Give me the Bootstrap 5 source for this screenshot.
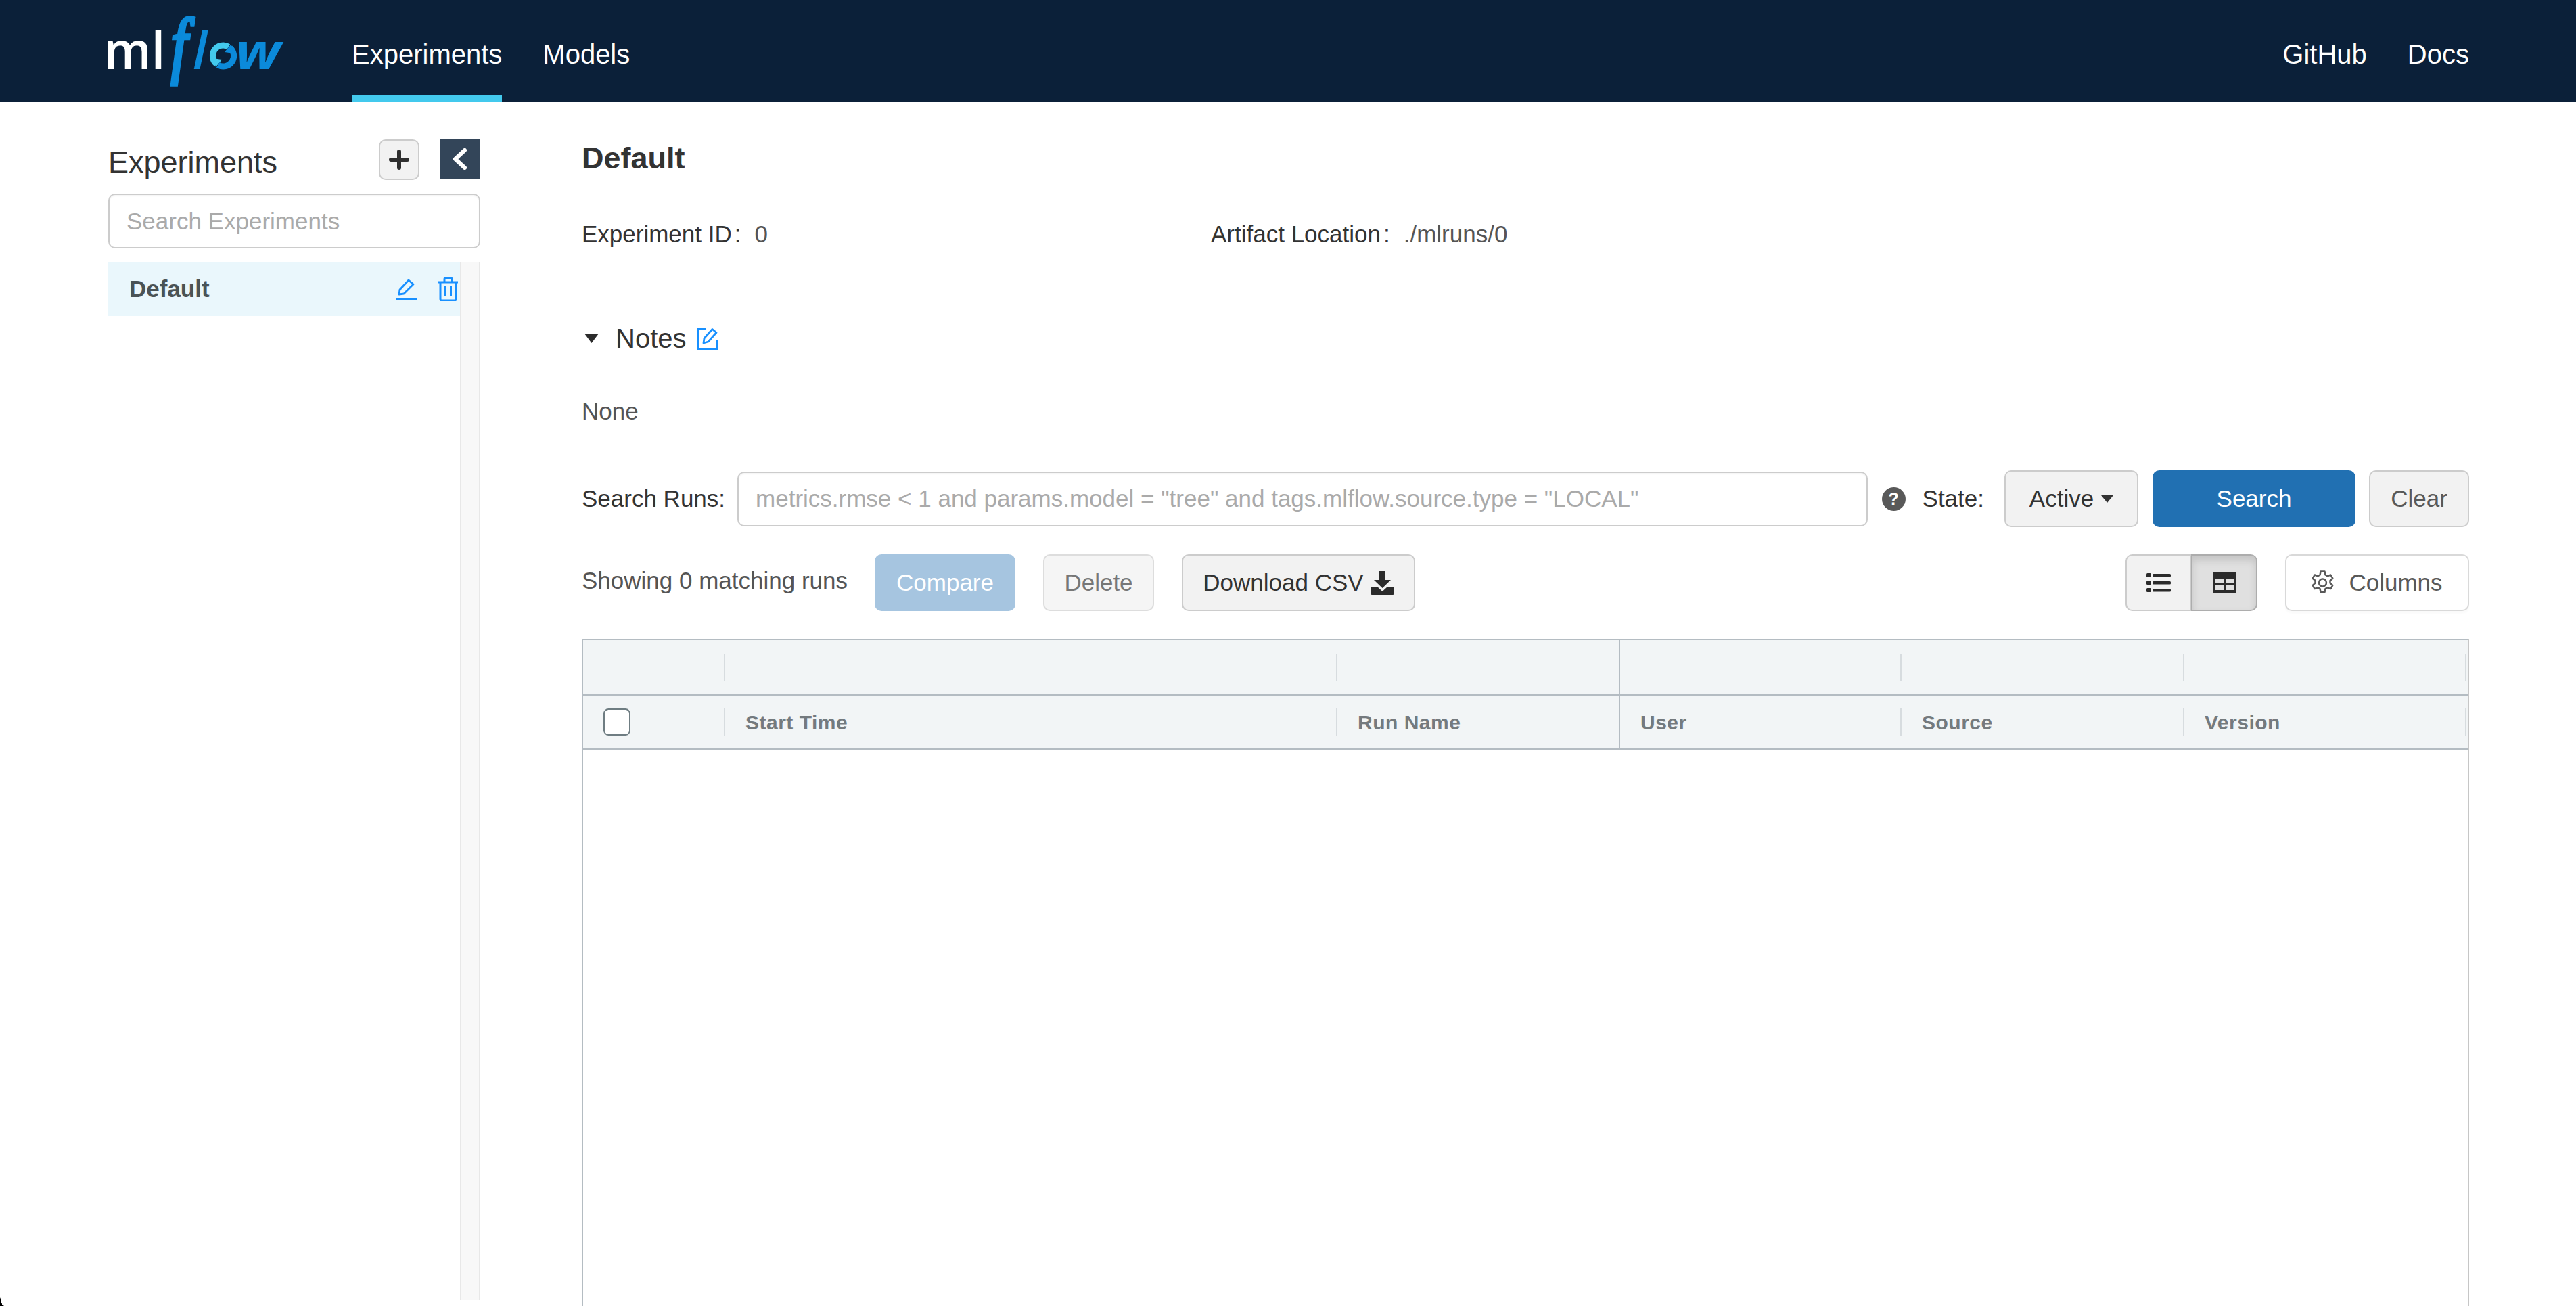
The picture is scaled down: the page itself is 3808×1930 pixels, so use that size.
<!DOCTYPE html>
<html lang="en">
<head>
<meta charset="utf-8">
<title>MLflow</title>
<link href="https://cdn.jsdelivr.net/npm/bootstrap@5.3.0/dist/css/bootstrap.min.css" rel="stylesheet">
<style>
html,body{height:100%;}
body{font-family:"Liberation Sans",Arial,sans-serif;font-size:35px;line-height:50px;color:#333;background:#fff;overflow:hidden;}
.top-bar{height:150px;background:#0b2039;padding:0 158px 0 160px;flex-wrap:nowrap;}
.logo-box{display:block;width:260px;height:100px;margin-right:100px;overflow:visible;}
.top-link{display:flex;align-items:center;height:150px;padding:19px 0 0;font-size:40px;line-height:50px;color:#fff;text-decoration:none;border-bottom:10px solid transparent;}
.top-link.is-active{border-bottom-color:#43c9ed;}
.top-links{gap:60px;}
.page-body{height:1780px;padding:0 158px 0 160px;}
.side-col{width:550px;margin-right:150px;padding:55px 0 9px;flex:none;}
.side-title{font-size:45px;line-height:60px;height:60px;padding-top:5px;color:#333;}
.plus-btn{width:60px;height:60px;margin-top:1px;padding:0;border:2.5px solid #ccc;border-radius:10px;background:#f2f2f2;}
.back-btn{width:60px;height:60px;margin-left:30px;padding:0;border:0;border-radius:0;background:#334559;}
.find-box{height:81px;border:2.5px solid #ccc;border-radius:10px;font-size:35px;padding:0 25px;box-shadow:inset 0 2px 2px rgba(0,0,0,.04);color:#333;}
.find-box::placeholder{color:#aaa;opacity:1;}
.side-search{margin:20px 0;}
.side-list{min-height:0;}
.exp-item{height:80px;padding:0 2px 0 31px;border:0;border-radius:0;background:#eaf7fc;color:#4a5356;font-weight:700;font-size:35px;line-height:80px;}
.exp-tools{gap:30px;}
.scroll-track{width:30px;flex:none;background:#f8f8f8;border-left:2.5px solid #e8e8e8;border-right:2.5px solid #e8e8e8;}
.main-col{width:2790px;flex:none;min-height:0;}
.exp-title{font-size:45px;line-height:60px;font-weight:700;margin:54px 0 0;color:#333;}
.meta-row{margin-top:57px;}
.meta-cell{width:930px;}
.colon{margin:0 20px 0 4px;}
.val-text{color:#555;}
.notes-row{margin-top:104px;font-size:40px;line-height:50px;color:#333;}
.notes-row .notes-word{margin:0 15px 0 24px;}
.none-text{margin-top:58px;color:#555;}
.search-row{margin-top:62px;height:84px;}
.plain-label{margin-right:18px;white-space:nowrap;}
.query-box{flex:1 1 auto;width:auto;}
.help-dot{width:35px;height:35px;margin:0 25px 0 21px;border-radius:50%;background:#595959;color:#fff;font-size:25px;line-height:35px;font-weight:700;text-align:center;flex:none;}
.act-btn{height:84px;padding:0;border:2.5px solid #ccc;border-radius:10px;background:#f2f2f2;color:#333;font-size:35px;line-height:50px;display:inline-flex;align-items:center;justify-content:center;}
.act-btn.state-btn{width:198px;margin-left:30px;}
.act-btn.dropdown-toggle::after{margin-left:11px;border-top:11px solid #333;border-right:9px solid transparent;border-left:9px solid transparent;border-bottom:0;vertical-align:0;}
.act-btn.go-btn{width:300px;margin-left:21px;background:#2170b2;border-color:#2170b2;color:#fff;}
.act-btn.clear-btn{width:148px;margin-left:20px;color:#595959;}
.tools-row{margin-top:40px;height:84px;}
.count-text{color:#555;margin:0 40px 6px 0;white-space:nowrap;}
.act-btn.cmp-btn{width:208px;background:#a6c5e0;border-color:#a6c5e0;color:#fff;opacity:1;}
.act-btn.del-btn{width:164px;margin-left:41px;background:#f5f5f5;border-color:#ddd;color:#777;opacity:1;}
.act-btn.csv-btn{width:345px;margin-left:41px;gap:10px;}
.view-group{margin-left:auto;}
.view-group .act-btn{width:98px;}
.view-group .act-btn.is-on{background:#e0e0e0;border-color:#adadad;box-shadow:inset 0 7px 12px rgba(0,0,0,.125);}
.act-btn.cols-btn{width:272px;margin-left:41px;background:#fff;border-color:#d9d9d9;color:#595959;gap:22px;box-shadow:0 4px 3px rgba(0,0,0,.02);}
.runs-grid{margin-top:41px;flex:1 1 auto;border:2.5px solid #b4bcc2;border-right-color:#c6c6c6;border-bottom:0;}
.head-line{background:#f2f5f6;height:82px;border-bottom:2.5px solid #b4bcc2;}
.head-line + .head-line{height:80px;}
.head-cell{height:100%;padding-left:30px;font-size:30px;font-weight:700;letter-spacing:.5px;color:#747a7e;justify-content:space-between;align-items:center;line-height:30px;}
.head-label{padding-top:2px;}
.head-mark{width:2px;height:40px;background:#d7dcdf;flex:none;}
.w-first{width:210px;}
.w-start{width:905px;}
.w-name{width:418px;border-right:2.5px solid #b4bcc2;}
.w-user{width:416px;}
.w-src{width:418px;}
.w-ver{width:417px;}
.tick-box{width:40px;height:40px;margin:0;border:2.5px solid #6f7d82;border-radius:7px;background-color:#fff;flex:none;}
.corner-l{position:fixed;left:0;bottom:0;width:6px;height:18px;pointer-events:none;background:radial-gradient(ellipse 6px 18px at 100% 0,transparent 96%,#000 100%);}
</style>
</head>
<body>
<nav class="navbar top-bar d-flex align-items-center">
  <div class="d-flex align-items-center">
    <svg class="logo-box" viewBox="0 0 260 100" role="img" aria-label="mlflow">
      <text x="-6" y="77" font-family="Open Sans" font-weight="600" font-size="76" fill="#fff" textLength="90" lengthAdjust="spacingAndGlyphs">ml</text>
      <text transform="translate(93 77) scale(.8 1)" font-family="Liberation Serif" font-style="italic" font-size="108" fill="#0b8ada" stroke="#0b8ada" stroke-width="5.500">f</text>
      <text x="125" y="77" font-family="Open Sans" font-style="italic" font-weight="600" font-size="76" fill="#0b8ada">l</text>
      <path d="M177.750 44.100A15.500 15.500 0 0 0 160 69.400" fill="none" stroke="#43c9ed" stroke-width="9"/>
      <path d="M155 61l13 2-9 11z" fill="#43c9ed"/>
      <g transform="rotate(180 170 57.500)"><path d="M177.750 44.100A15.500 15.500 0 0 0 160 69.400" fill="none" stroke="#0b8ada" stroke-width="9"/><path d="M155 61l13 2-9 11z" fill="#0b8ada"/></g>
      <text x="188" y="77" font-family="Open Sans" font-style="italic" font-weight="700" font-size="74" fill="#0b8ada" textLength="67" lengthAdjust="spacingAndGlyphs">w</text>
    </svg>
    <div class="d-flex top-links">
      <a class="top-link is-active" href="#">Experiments</a>
      <a class="top-link" href="#">Models</a>
    </div>
  </div>
  <div class="d-flex top-links">
    <a class="top-link" href="#">GitHub</a>
    <a class="top-link" href="#">Docs</a>
  </div>
</nav>
<div class="d-flex page-body">
  <aside class="side-col d-flex flex-column">
    <div class="d-flex align-items-start">
      <div class="side-title flex-grow-1">Experiments</div>
      <button class="btn plus-btn d-flex align-items-center justify-content-center" type="button" aria-label="Add">
        <svg width="30" height="30" viewBox="0 0 30 30"><path d="M15 3v24M3 15h24" stroke="#2f2f2f" stroke-width="6" stroke-linecap="round"/></svg>
      </button>
      <button class="btn back-btn d-flex align-items-center justify-content-center" type="button" aria-label="Collapse">
        <svg width="24" height="32" viewBox="0 0 24 32"><path d="M19 3L5 16l14 13" fill="none" stroke="#fff" stroke-width="6" stroke-linecap="round" stroke-linejoin="round"/></svg>
      </button>
    </div>
    <div class="side-search"><input class="form-control find-box" placeholder="Search Experiments"></div>
    <div class="d-flex flex-grow-1 side-list">
      <ul class="list-group flex-grow-1 rounded-0">
        <li class="list-group-item exp-item d-flex justify-content-between align-items-center">
          <span>Default</span>
          <span class="d-flex align-items-center exp-tools">
            <svg width="32" height="34" viewBox="0 0 32 34"><path d="M5 25l1-7L19 4l7 6L12 24z" fill="none" stroke="#1890ff" stroke-width="2.800" stroke-linejoin="round"/><path d="M0 32h32" stroke="#1890ff" stroke-width="2.800"/></svg>
            <svg width="31" height="36" viewBox="0 0 31 36"><path d="M1 8h29M10 8V3.500q0-2 2-2h7q2 0 2 2V8M4 8v25q0 2 2 2h19q2 0 2-2V8M11.500 14v14M19.500 14v14" fill="none" stroke="#1890ff" stroke-width="3"/></svg>
          </span>
        </li>
      </ul>
      <div class="scroll-track"></div>
    </div>
  </aside>
  <main class="main-col d-flex flex-column">
    <h1 class="exp-title">Default</h1>
    <div class="d-flex meta-row">
      <div class="meta-cell">Experiment ID<span class="colon">:</span><span class="val-text">0</span></div>
      <div>Artifact Location<span class="colon">:</span><span class="val-text">./mlruns/0</span></div>
    </div>
    <div class="d-flex align-items-center notes-row">
      <svg width="26" height="14" viewBox="0 0 26 14"><path d="M4 0h21L14.500 14z" fill="#2b2b2b"/></svg>
      <span class="notes-word">Notes</span>
      <svg width="32" height="33" viewBox="0 0 32 33"><path d="M14 2H1.500v29.500h29V18" fill="none" stroke="#1890ff" stroke-width="3"/><path d="M10 23l1-7L23 2.500l6 5L17 21z" fill="none" stroke="#1890ff" stroke-width="2.800" stroke-linejoin="round"/></svg>
    </div>
    <div class="none-text">None</div>
    <div class="d-flex align-items-center search-row">
      <label class="plain-label" for="q">Search Runs:</label>
      <input id="q" class="form-control find-box query-box" placeholder='metrics.rmse &lt; 1 and params.model = "tree" and tags.mlflow.source.type = "LOCAL"'>
      <span class="help-dot">?</span>
      <span>State:</span>
      <button class="btn act-btn state-btn dropdown-toggle" type="button">Active</button>
      <button class="btn act-btn go-btn" type="button">Search</button>
      <button class="btn act-btn clear-btn" type="button">Clear</button>
    </div>
    <div class="d-flex align-items-center tools-row">
      <span class="count-text">Showing 0 matching runs</span>
      <button class="btn act-btn cmp-btn" type="button" disabled>Compare</button>
      <button class="btn act-btn del-btn" type="button" disabled>Delete</button>
      <button class="btn act-btn csv-btn" type="button">Download CSV
        <svg width="35" height="35" viewBox="0 0 35 35"><path d="M13 0h9v13h8L17.500 25 5 13h8z" fill="#2b2b2b"/><path d="M0 23h10l7.500 7 7.500-7h10v10q0 2-2 2H2q-2 0-2-2z" fill="#2b2b2b"/></svg>
      </button>
      <div class="btn-group view-group" role="group">
        <button class="btn act-btn" type="button" aria-label="List view">
          <svg width="36" height="28" viewBox="0 0 36 28"><g fill="#2b2b2b"><rect width="7" height="6" rx="1.500"/><rect x="9" y="1" width="27" height="4.500" rx="1.500"/><rect y="11" width="7" height="6" rx="1.500"/><rect x="9" y="12" width="27" height="4.500" rx="1.500"/><rect y="22" width="7" height="6" rx="1.500"/><rect x="9" y="23" width="27" height="4.500" rx="1.500"/></g></svg>
        </button>
        <button class="btn act-btn is-on" type="button" aria-label="Table view">
          <svg width="35" height="32" viewBox="0 0 35 32"><rect width="35" height="32" rx="3" fill="#2b2b2b"/><g fill="#dfdfdf"><rect x="4" y="10" width="12" height="7"/><rect x="19" y="10" width="12" height="7"/><rect x="4" y="20" width="12" height="7"/><rect x="19" y="20" width="12" height="7"/></g></svg>
        </button>
      </div>
      <button class="btn act-btn cols-btn" type="button">
        <svg width="33" height="36" viewBox="0 0 33 36"><path d="M13.500 1.500h6l1 5 3 1.700 4.800-1.700 3 5.200-3.800 3.300v3.600l3.800 3.300-3 5.200-4.800-1.700-3 1.700-1 5h-6l-1-5-3-1.700-4.800 1.700-3-5.200 3.800-3.300v-3.600L1.700 11.700l3-5.200 4.800 1.700 3-1.700z" fill="none" stroke="#595959" stroke-width="2.500" stroke-linejoin="round"/><circle cx="16.500" cy="18" r="5.500" fill="none" stroke="#595959" stroke-width="2.500"/></svg>
        <span>Columns</span>
      </button>
    </div>
    <div class="runs-grid">
      <div class="d-flex head-line">
        <div class="d-flex head-cell w-first"><span></span><span class="head-mark"></span></div>
        <div class="d-flex head-cell w-start"><span></span><span class="head-mark"></span></div>
        <div class="d-flex head-cell w-name"></div>
        <div class="d-flex head-cell w-user"><span></span><span class="head-mark"></span></div>
        <div class="d-flex head-cell w-src"><span></span><span class="head-mark"></span></div>
        <div class="d-flex head-cell w-ver"><span></span><span class="head-mark"></span></div>
      </div>
      <div class="d-flex head-line">
        <div class="d-flex head-cell w-first"><input class="form-check-input tick-box" type="checkbox" aria-label="Select all"><span class="head-mark"></span></div>
        <div class="d-flex head-cell w-start"><span class="head-label">Start Time</span><span class="head-mark"></span></div>
        <div class="d-flex head-cell w-name"><span class="head-label">Run Name</span></div>
        <div class="d-flex head-cell w-user"><span class="head-label">User</span><span class="head-mark"></span></div>
        <div class="d-flex head-cell w-src"><span class="head-label">Source</span><span class="head-mark"></span></div>
        <div class="d-flex head-cell w-ver"><span class="head-label">Version</span><span class="head-mark"></span></div>
      </div>
    </div>
  </main>
</div>
<div class="corner-l"></div>
</body>
</html>
